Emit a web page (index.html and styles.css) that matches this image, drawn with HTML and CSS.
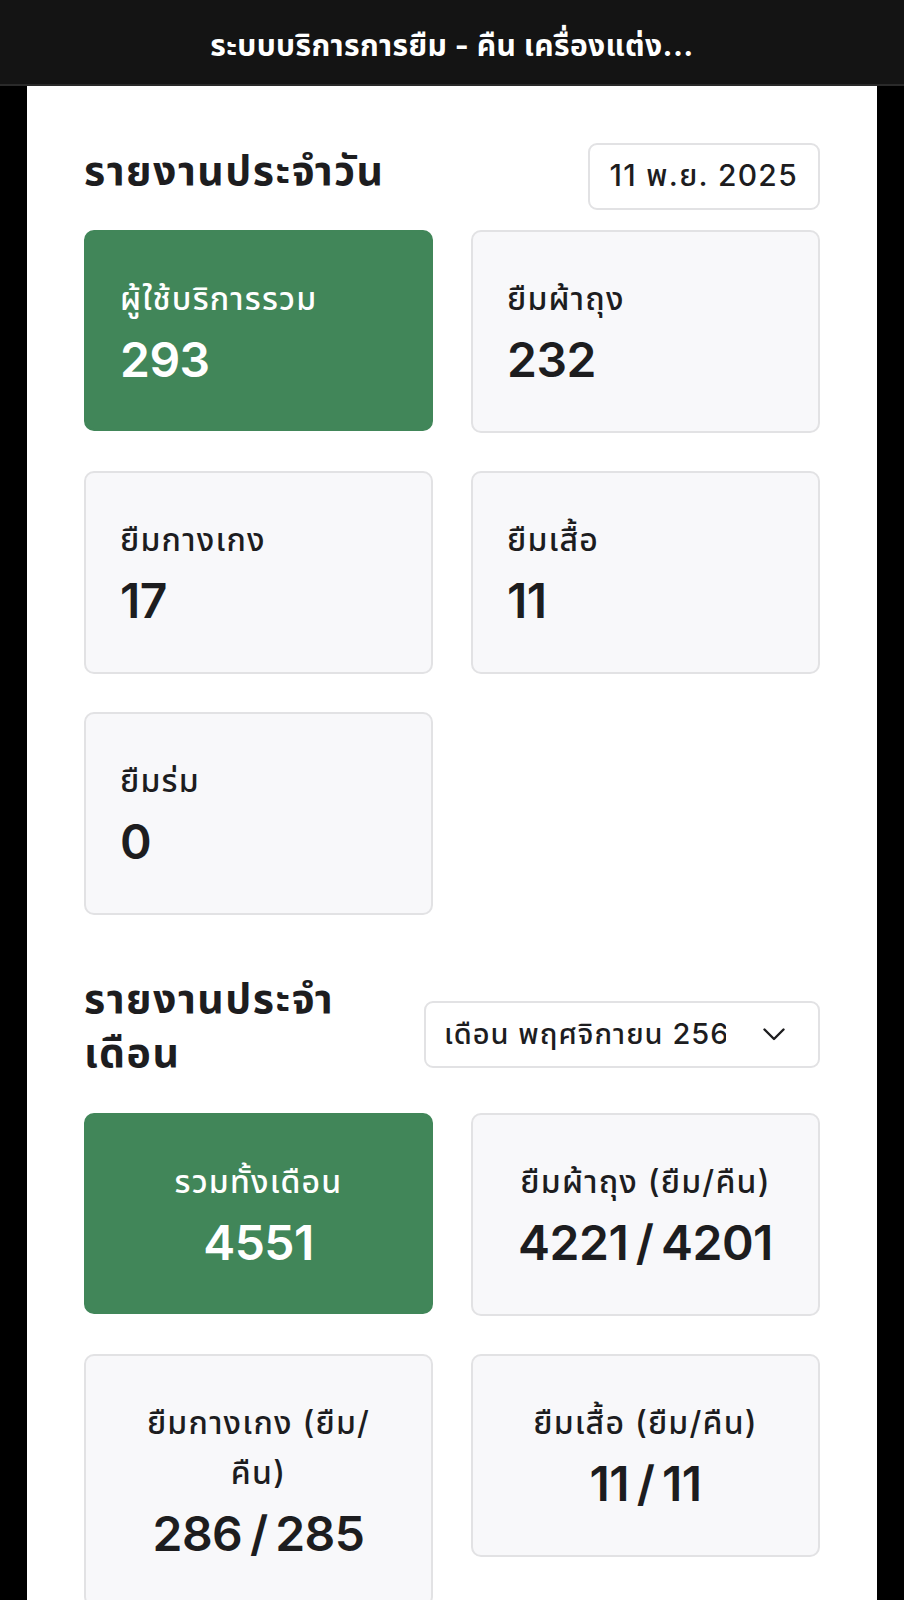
FILE: index.html
```html
<!DOCTYPE html>
<html lang="th">
<head>
    <meta charset="UTF-8">
    <meta name="viewport" content="width=device-width, initial-scale=1.0">
    <title>ระบบบริการการยืม - คืน เครื่องแต่งกาย</title>
    <link rel="stylesheet" href="styles.css">
</head>
<body>
    <header class="topbar">
        <h1>ระบบบริการการยืม - คืน เครื่องแต่ง...</h1>
    </header>

    <main class="page">
        <section class="report">
            <div class="report-head">
                <h2>รายงานประจำวัน</h2>
                <div class="date-box">11 พ.ย. 2025</div>
            </div>
            <div class="stat-grid">
                <div class="stat-card primary">
                    <p class="stat-label">ผู้ใช้บริการรวม</p>
                    <p class="stat-value">293</p>
                </div>
                <div class="stat-card">
                    <p class="stat-label">ยืมผ้าถุง</p>
                    <p class="stat-value">232</p>
                </div>
                <div class="stat-card">
                    <p class="stat-label">ยืมกางเกง</p>
                    <p class="stat-value">17</p>
                </div>
                <div class="stat-card">
                    <p class="stat-label">ยืมเสื้อ</p>
                    <p class="stat-value">11</p>
                </div>
                <div class="stat-card">
                    <p class="stat-label">ยืมร่ม</p>
                    <p class="stat-value">0</p>
                </div>
            </div>
        </section>

        <section class="report monthly">
            <div class="report-head">
                <h2>รายงานประจำเดือน</h2>
                <div class="month-select">
                    <span class="month-text">เดือน พฤศจิกายน 2568</span>
                    <svg class="chevron" width="22" height="13" viewBox="0 0 22 13">
                        <path d="M1.5 1.5 L11 11 L20.5 1.5" fill="none" stroke="#1d1d1f" stroke-width="2.4" stroke-linecap="round" stroke-linejoin="round"/>
                    </svg>
                </div>
            </div>
            <div class="stat-grid">
                <div class="stat-card primary">
                    <p class="stat-label">รวมทั้งเดือน</p>
                    <p class="stat-value">4551</p>
                </div>
                <div class="stat-card">
                    <p class="stat-label">ยืมผ้าถุง (ยืม/คืน)</p>
                    <p class="stat-value">4221 / 4201</p>
                </div>
                <div class="stat-card">
                    <p class="stat-label">ยืมกางเกง (ยืม/คืน)</p>
                    <p class="stat-value">286 / 285</p>
                </div>
                <div class="stat-card">
                    <p class="stat-label">ยืมเสื้อ (ยืม/คืน)</p>
                    <p class="stat-value">11 / 11</p>
                </div>
                <div class="stat-card">
                    <p class="stat-label">ยืมร่ม (ยืม/คืน)</p>
                    <p class="stat-value">0 / 0</p>
                </div>
            </div>
        </section>
    </main>
</body>
</html>
```

FILE: styles.css
```css
* {
    padding: 0;
    margin: 0;
    box-sizing: border-box;
}
body {
    background: #000;
    font-family: Inter, "Noto Sans Thai", "Noto Sans", sans-serif;
    color: #1d1d1f;
}
.topbar {
    height: 86px;
    padding-top: 10px;
    background: #141414;
    border-bottom: 2px solid #2a2a2a;
    display: flex;
    justify-content: center;
    align-items: center;
}
.topbar h1 {
    color: #fff;
    font-size: 30px;
    font-weight: 700;
    letter-spacing: 0.4px;
}
.page {
    background: #fff;
    margin: 0 27px;
    padding: 57px 57px 40px;
}
.report + .report {
    margin-top: 56px;
}
.report-head {
    display: flex;
    justify-content: space-between;
    align-items: flex-start;
    gap: 20px;
    margin-bottom: 20px;
}
.monthly .report-head {
    margin-bottom: 34px;
}
.report-head h2 {
    font-size: 41px;
    font-weight: 700;
    line-height: 54px;
    letter-spacing: 1.5px;
}
.monthly .report-head h2 {
    flex: 1;
}
.date-box {
    height: 67px;
    padding: 0 20px;
    border: 2px solid #e2e2e4;
    border-radius: 9px;
    display: flex;
    align-items: center;
    font-size: 30px;
    font-weight: 500;
    letter-spacing: 1.3px;
}
.month-select {
    width: 396px;
    height: 67px;
    margin-top: 30px;
    padding: 0 33px 0 18px;
    border: 2px solid #e2e2e4;
    border-radius: 9px;
    display: flex;
    align-items: center;
    gap: 37px;
    font-size: 29px;
    font-weight: 500;
    letter-spacing: 1px;
}
.month-text {
    flex: 1;
    white-space: nowrap;
    overflow: hidden;
}
.chevron {
    flex-shrink: 0;
}
.stat-grid {
    display: grid;
    grid-template-columns: 1fr 1fr;
    gap: 38px;
    align-items: start;
}
.stat-card {
    background: #f8f8fa;
    border: 2px solid #e2e2e4;
    border-radius: 10px;
    padding: 42px 34px 41px;
}
.stat-card.primary {
    padding-bottom: 39px;
    background: #418659;
    border-color: #418659;
    color: #fff;
}
.stat-label {
    font-size: 32px;
    font-weight: 500;
    line-height: 50px;
    letter-spacing: 1.2px;
}
.stat-value {
    margin-top: 6px;
    font-size: 48px;
    font-weight: 600;
    line-height: 60px;
    letter-spacing: -0.5px;
    word-spacing: -4px;
}
.monthly .stat-card {
    padding-left: 40px;
    padding-right: 40px;
    text-align: center;
}
```
